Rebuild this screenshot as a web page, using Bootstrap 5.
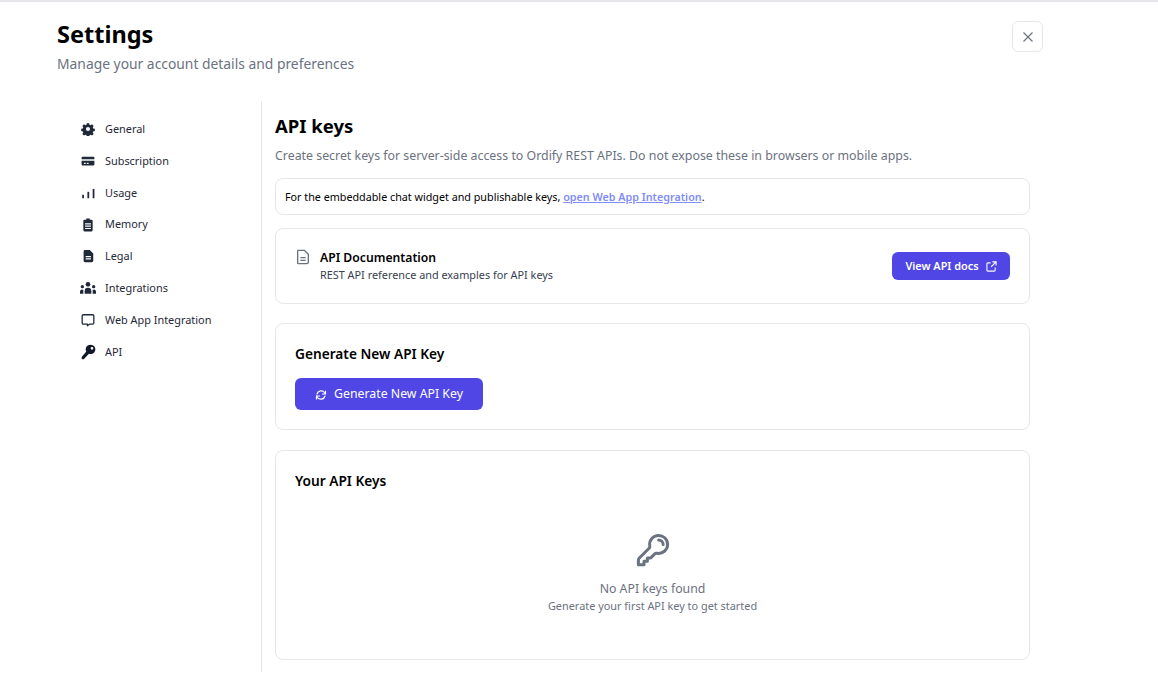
<!DOCTYPE html>
<html lang="en">
<head>
  <meta charset="UTF-8" /><meta name="viewport" content="width=device-width, initial-scale=1" />
  <title>Settings</title>
  <link href="https://cdn.jsdelivr.net/npm/bootstrap@5.3.0/dist/css/bootstrap.min.css" rel="stylesheet" />
  <style>
    body { font-family: "Noto Sans", sans-serif; background: #fff; color: #000; border-top: 2px solid #e5e7eb; height: 700px; overflow: hidden; }
    .shell { width: 986px; margin-left: 57px; }
    .head-row { height: 99px; padding-top: 16px; }
    .page-title { font-size: 23.5px; font-weight: 700; line-height: 32px; margin: 0; }
    .page-sub { font-size: 13.85px; color: #6b7280; line-height: 24px; margin-top: 2px; }
    .close-box { width: 31px; height: 31px; margin-top: 3px; border: 1px solid #e5e7eb; border-radius: 6px; background: #fff; color: #6b7280; padding: 0; }
    .side { width: 205px; height: 571px; border-right: 1px solid #e5e7eb; padding: 12px 0 0 23px; flex-shrink: 0; }
    .side-item { height: 31.88px; gap: 9px; font-size: 10.9px; color: #1f2937; }
    .side-item svg { width: 14px; height: 14px; margin: 0 1px; flex-shrink: 0; }
    .side-item svg.icon-wide { width: 16px; height: 16px; margin: 0; }
    .main-col { width: 755px; margin-left: 13px; }
    .sect-title { font-size: 18.5px; font-weight: 700; line-height: 28px; margin: 11px 0 0; }
    .sect-sub { font-size: 12.36px; color: #6b7280; line-height: 20px; margin: 6px 0 12px; }
    .panel { border: 1px solid #e5e7eb; border-radius: 8px; background: #fff; }
    .note-panel { height: 37px; padding: 1px 9px 0; font-size: 10.75px; margin-bottom: 13px; }
    .note-panel a { color: #818cf8; font-weight: 600; }
    .doc-panel { height: 76px; padding: 0 19px; margin-bottom: 19px; }
    .doc-row { gap: 9px; }
    .doc-title { font-size: 12.2px; font-weight: 600; line-height: 17px; }
    .doc-sub { font-size: 10.86px; color: #374151; line-height: 17px; }
    .btn-indigo { background: #4f46e5; color: #fff; border: 0; border-radius: 6px; font-weight: 500; }
    .btn-indigo:hover { background: #4338ca; color: #fff; }
    .btn-docs { height: 28px; width: 118px; font-size: 10.9px; font-weight: 600; gap: 7px; padding: 0; }
    .gen-panel { height: 107px; padding: 19px 19px; margin-bottom: 20px; }
    .card-head { font-size: 13.7px; font-weight: 600; line-height: 22px; margin: 0; }
    .btn-gen { height: 32px; width: 188px; font-size: 12.3px; font-weight: 400; gap: 7px; padding: 1px 0 0; margin-top: 13px; }
    .keys-panel { height: 210px; padding: 19px 19px; }
    .empty-area { margin-top: 40px; color: #6b7280; }
    .empty-main { font-size: 12.3px; line-height: 19px; margin-top: 11px; }
    .empty-sub { font-size: 10.9px; line-height: 16px; }
  </style>
</head>
<body>
  <div class="shell">
    <div class="d-flex justify-content-between align-items-start head-row">
      <div>
        <h1 class="page-title">Settings</h1>
        <div class="page-sub">Manage your account details and preferences</div>
      </div>
      <button class="close-box d-flex align-items-center justify-content-center" aria-label="Close">
        <svg width="12" height="12" viewBox="0 0 12 12" fill="none" stroke="currentColor" stroke-width="1.2"><path d="M1.5 1.5l9 9M10.5 1.5l-9 9"/></svg>
      </button>
    </div>

    <div class="d-flex">
      <!-- SIDEBAR -->
      <div class="side">
        <div class="side-item d-flex align-items-center">
          <svg viewBox="0 0 24 24" fill="#1f2937"><path fill-rule="evenodd" d="M10 2h4l.6 2.8 1.9.8 2.4-1.6 2.8 2.8-1.6 2.4.8 1.9 2.8.5v4l-2.8.6-.8 1.9 1.6 2.4-2.8 2.8-2.4-1.6-1.9.8-.5 2.8H10l-.6-2.8-1.9-.8-2.4 1.6-2.8-2.8 1.6-2.4-.8-1.9-2.8-.6v-4l2.8-.5.8-1.9-1.6-2.4 2.8-2.8 2.4 1.6 1.9-.8zM12 8.500a3.500 3.500 0 1 0 0 7 3.500 3.500 0 0 0 0-7z"/></svg>
          <span>General</span>
        </div>
        <div class="side-item d-flex align-items-center">
          <svg viewBox="0 0 24 24" fill="#1f2937"><path fill-rule="evenodd" d="M3 4.500h18a2 2 0 0 1 2 2V9H1V6.500a2 2 0 0 1 2-2zM1 11.500h22v6a2 2 0 0 1-2 2H3a2 2 0 0 1-2-2zm4 3.500v2h3v-2zm5 0v2h3v-2z"/></svg>
          <span>Subscription</span>
        </div>
        <div class="side-item d-flex align-items-center">
          <svg viewBox="0 0 24 24" fill="#1f2937"><rect x="2" y="15" width="3" height="6"/><rect x="11" y="10" width="3" height="11"/><rect x="20" y="5" width="3" height="16"/></svg>
          <span>Usage</span>
        </div>
        <div class="side-item d-flex align-items-center">
          <svg viewBox="0 0 24 24" fill="#1f2937"><path fill-rule="evenodd" d="M9 1h6v2h3a2 2 0 0 1 2 2v16a2 2 0 0 1-2 2H6a2 2 0 0 1-2-2V5a2 2 0 0 1 2-2h3zM7 9v2h10V9zm0 4v2h10v-2zm0 4v2h10v-2z"/></svg>
          <span>Memory</span>
        </div>
        <div class="side-item d-flex align-items-center">
          <svg viewBox="0 0 24 24" fill="#1f2937"><path fill-rule="evenodd" d="M7 1.500h8l6 6V20a2.500 2.500 0 0 1-2.500 2.500H7A2.500 2.500 0 0 1 4.500 20V4A2.500 2.500 0 0 1 7 1.500zM8 12v2h9v-2zm0 4v2h9v-2z"/></svg>
          <span>Legal</span>
        </div>
        <div class="side-item d-flex align-items-center">
          <svg class="icon-wide" viewBox="0 0 24 24" fill="#1f2937"><circle cx="12" cy="6.500" r="3.500"/><circle cx="3.500" cy="10" r="2.500"/><circle cx="20.500" cy="10" r="2.500"/><path d="M7 20.500v-4a5 5 0 0 1 10 0v4zM0 20.500v-3.500a3 3 0 0 1 5-2v5.500zM24 20.500v-3.500a3 3 0 0 0-5-2v5.500z"/></svg>
          <span>Integrations</span>
        </div>
        <div class="side-item d-flex align-items-center">
          <svg viewBox="0 0 24 24" fill="none" stroke="#1f2937" stroke-width="2.200" stroke-linejoin="round"><path d="M4 3h16a2 2 0 0 1 2 2v12a2 2 0 0 1-2 2h-5l-4 3v-3H4a2 2 0 0 1-2-2V5a2 2 0 0 1 2-2z"/></svg>
          <span>Web App Integration</span>
        </div>
        <div class="side-item d-flex align-items-center">
          <svg class="icon-wide" viewBox="0 0 24 24" fill="#111827"><path fill-rule="evenodd" d="M16 1a7 7 0 1 1-2.600 13.500L7 21.500 5.500 23H3.500L2.500 21.500V19.500L9.500 11.400A7 7 0 0 1 16 1zm2 3.500a2 2 0 1 0 0 4 2 2 0 0 0 0-4z"/></svg>
          <span>API</span>
        </div>
      </div>

      <!-- API KEYS -->
      <div class="main-col">
        <h2 class="sect-title">API keys</h2>
        <p class="sect-sub">Create secret keys for server-side access to Ordify REST APIs. Do not expose these in browsers or mobile apps.</p>

        <div class="panel note-panel d-flex align-items-center">
          <span>For the embeddable chat widget and publishable keys, <a href="#">open Web App Integration</a>.</span>
        </div>

        <div class="panel doc-panel d-flex align-items-center justify-content-between">
          <div class="d-flex align-items-start doc-row">
            <svg width="16" height="16" viewBox="0 0 24 24" fill="none" stroke="#6b7280" stroke-width="2" stroke-linejoin="round"><path d="M5 2h9l6 6v12a2 2 0 0 1-2 2H5a1 1 0 0 1-1-1V3a1 1 0 0 1 1-1z"/><path d="M8 13h8M8 17h8"/></svg>
            <div>
              <div class="doc-title">API Documentation</div>
              <div class="doc-sub">REST API reference and examples for API keys</div>
            </div>
          </div>
          <button class="btn btn-indigo btn-docs d-flex align-items-center justify-content-center">
            View API docs
            <svg width="11" height="11" viewBox="0 0 24 24" fill="none" stroke="#fff" stroke-width="2.400"><path d="M10 4H4a2 2 0 0 0-2 2v14a2 2 0 0 0 2 2h14a2 2 0 0 0 2-2v-6M14 2h8v8M22 2L11 13"/></svg>
          </button>
        </div>

        <div class="panel gen-panel">
          <h3 class="card-head">Generate New API Key</h3>
          <button class="btn btn-indigo btn-gen d-flex align-items-center justify-content-center">
            <svg width="12" height="12" viewBox="0 0 24 24" fill="none" stroke="#fff" stroke-width="2.400" stroke-linecap="round" stroke-linejoin="round"><path d="M4 10a8.500 8.500 0 0 1 15-3l2 3M21 4v6h-6M20 14a8.500 8.500 0 0 1-15 3l-2-3M3 20v-6h6"/></svg>
            Generate New API Key
          </button>
        </div>

        <div class="panel keys-panel">
          <h3 class="card-head">Your API Keys</h3>
          <div class="empty-area text-center">
            <svg width="36" height="36" viewBox="0 0 24 24" fill="none" stroke="#6b7280" stroke-width="2" stroke-linecap="round" stroke-linejoin="round"><path d="M15.750 5.250a3 3 0 0 1 3 3m3 0a6 6 0 0 1-7.029 5.912c-.563-.097-1.159.026-1.563.43L10.500 17.250H8.250v2.250H6v2.250H2.250v-2.818c0-.597.237-1.170.659-1.591l6.499-6.499c.404-.404.527-1 .43-1.563A6 6 0 1 1 21.750 8.250z"/></svg>
            <div class="empty-main">No API keys found</div>
            <div class="empty-sub">Generate your first API key to get started</div>
          </div>
        </div>
      </div>
    </div>
  </div>
  <script src="https://cdn.jsdelivr.net/npm/bootstrap@5.3.0/dist/js/bootstrap.bundle.min.js"></script>
</body>
</html>
